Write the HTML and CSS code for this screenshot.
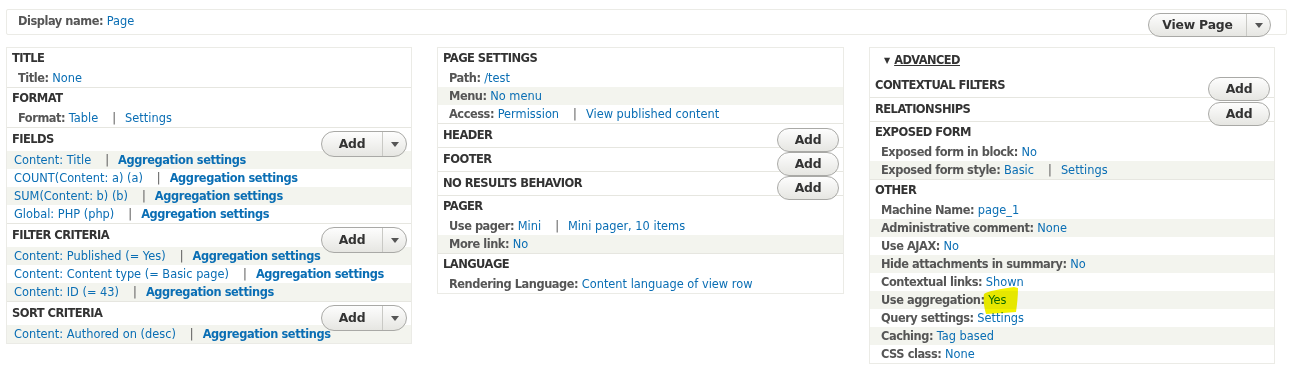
FILE: index.html
```html
<!DOCTYPE html>
<html lang="en">
<head>
  <meta charset="UTF-8">
  <title>Views - Page display</title>
  <link rel="stylesheet" href="styles.css">
</head>
<body>

  <div class="display-top">
    <span class="label">Display name:</span>&nbsp;<a href="#">Page</a>
    <div class="btn split view-page">
      <span class="btn-main">View Page</span>
      <span class="btn-drop"><svg width="8" height="5" viewBox="0 0 8 5"><path d="M0 0 H8 L4 5 Z" fill="#555"/></svg></span>
    </div>
  </div>

  <div class="columns">

    <div class="column">
      <div class="bucket">
        <div class="bucket-title">Title</div>
        <div class="row setting"><span class="label">Title:</span> <a href="#">None</a></div>
      </div>
      <div class="bucket">
        <div class="bucket-title">Format</div>
        <div class="row setting"><span class="label">Format:</span> <a href="#">Table</a><span class="sep">|</span><a href="#">Settings</a></div>
      </div>
      <div class="bucket">
        <div class="bucket-title has-btn">Fields
          <div class="btn split add"><span class="btn-main">Add</span><span class="btn-drop"><svg width="8" height="5" viewBox="0 0 8 5"><path d="M0 0 H8 L4 5 Z" fill="#555"/></svg></span></div>
        </div>
        <div class="row item alt"><a href="#">Content: Title</a><span class="sep">|</span><a class="strong" href="#">Aggregation settings</a></div>
        <div class="row item"><a href="#">COUNT(Content: a) (a)</a><span class="sep">|</span><a class="strong" href="#">Aggregation settings</a></div>
        <div class="row item alt"><a href="#">SUM(Content: b) (b)</a><span class="sep">|</span><a class="strong" href="#">Aggregation settings</a></div>
        <div class="row item"><a href="#">Global: PHP (php)</a><span class="sep">|</span><a class="strong" href="#">Aggregation settings</a></div>
      </div>
      <div class="bucket">
        <div class="bucket-title has-btn">Filter criteria
          <div class="btn split add"><span class="btn-main">Add</span><span class="btn-drop"><svg width="8" height="5" viewBox="0 0 8 5"><path d="M0 0 H8 L4 5 Z" fill="#555"/></svg></span></div>
        </div>
        <div class="row item alt"><a href="#">Content: Published (= Yes)</a><span class="sep">|</span><a class="strong" href="#">Aggregation settings</a></div>
        <div class="row item"><a href="#">Content: Content type (= Basic page)</a><span class="sep">|</span><a class="strong" href="#">Aggregation settings</a></div>
        <div class="row item alt"><a href="#">Content: ID (= 43)</a><span class="sep">|</span><a class="strong" href="#">Aggregation settings</a></div>
      </div>
      <div class="bucket">
        <div class="bucket-title has-btn">Sort criteria
          <div class="btn split add"><span class="btn-main">Add</span><span class="btn-drop"><svg width="8" height="5" viewBox="0 0 8 5"><path d="M0 0 H8 L4 5 Z" fill="#555"/></svg></span></div>
        </div>
        <div class="row item alt"><a href="#">Content: Authored on (desc)</a><span class="sep">|</span><a class="strong" href="#">Aggregation settings</a></div>
      </div>
    </div>

    <div class="column wide">
      <div class="bucket">
        <div class="bucket-title">Page settings</div>
        <div class="row setting"><span class="label">Path:</span> <a href="#">/test</a></div>
        <div class="row setting alt"><span class="label">Menu:</span> <a href="#">No menu</a></div>
        <div class="row setting"><span class="label">Access:</span> <a href="#">Permission</a><span class="sep">|</span><a href="#">View published content</a></div>
      </div>
      <div class="bucket">
        <div class="bucket-title has-btn">Header <div class="btn add single">Add</div></div>
      </div>
      <div class="bucket">
        <div class="bucket-title has-btn">Footer <div class="btn add single">Add</div></div>
      </div>
      <div class="bucket">
        <div class="bucket-title has-btn">No results behavior <div class="btn add single">Add</div></div>
      </div>
      <div class="bucket">
        <div class="bucket-title">Pager</div>
        <div class="row setting"><span class="label">Use pager:</span> <a href="#">Mini</a><span class="sep">|</span><a href="#">Mini pager, 10 items</a></div>
        <div class="row setting alt"><span class="label">More link:</span> <a href="#">No</a></div>
      </div>
      <div class="bucket">
        <div class="bucket-title">Language</div>
        <div class="row setting"><span class="label">Rendering Language:</span> <a href="#">Content language of view row</a></div>
      </div>
    </div>

    <div class="column">
      <div class="advanced"><span class="arrow">&#9660;</span> <span class="advanced-link">Advanced</span></div>
      <div class="bucket">
        <div class="bucket-title has-btn tall">Contextual filters <div class="btn add single">Add</div></div>
      </div>
      <div class="bucket">
        <div class="bucket-title has-btn">Relationships <div class="btn add single">Add</div></div>
      </div>
      <div class="bucket">
        <div class="bucket-title">Exposed form</div>
        <div class="row setting"><span class="label">Exposed form in block:</span> <a href="#">No</a></div>
        <div class="row setting alt"><span class="label">Exposed form style:</span> <a href="#">Basic</a><span class="sep">|</span><a href="#">Settings</a></div>
      </div>
      <div class="bucket">
        <div class="bucket-title">Other</div>
        <div class="row setting"><span class="label">Machine Name:</span> <a href="#">page_1</a></div>
        <div class="row setting alt"><span class="label">Administrative comment:</span> <a href="#">None</a></div>
        <div class="row setting"><span class="label">Use AJAX:</span> <a href="#">No</a></div>
        <div class="row setting alt"><span class="label">Hide attachments in summary:</span> <a href="#">No</a></div>
        <div class="row setting"><span class="label">Contextual links:</span> <a href="#">Shown</a></div>
        <div class="row setting alt"><span class="label">Use aggregation:</span> <span class="hl"><a href="#">Yes</a><svg class="marker" width="38" height="28" viewBox="0 0 38 28"><path d="M1 7 C4 4 18 2 31 0 L35 1 C35 9 34 18 33 25 L20 26 L3 27 C1 20 0 12 1 7 Z" fill="#f2f200"/></svg></span></div>
        <div class="row setting"><span class="label">Query settings:</span> <a href="#">Settings</a></div>
        <div class="row setting alt"><span class="label">Caching:</span> <a href="#">Tag based</a></div>
        <div class="row setting"><span class="label">CSS class:</span> <a href="#">None</a></div>
      </div>
    </div>

  </div>

</body>
</html>
```

FILE: styles.css
```css
body { margin: 0; font-family: "DejaVu Sans", sans-serif; font-size: 11.4px; color: #333; background: #fff; }
a { color: #0a6eb4; text-decoration: none; }
.label { font-weight: bold; color: #555; letter-spacing: -0.45px; }
.strong { font-weight: bold; letter-spacing: -0.4px; }
.sep { color: #555; margin: 0 9px 0 14px; }

.display-top { display: flex; align-items: flex-start; margin: 9px 2px 0 6px; height: 24px; padding-left: 11px; border: 1px solid #ebebe6; border-radius: 2px; line-height: 22px; }
.view-page { margin: 3px 15px 0 auto; }
.view-page .btn-main { width: 97px; }

.columns { display: flex; gap: 25px; margin: 12px 0 0 6px; align-items: flex-start; }
.column { width: 406px; border: 1px solid #ebebe6; box-sizing: border-box; }
.column.wide { width: 407px; }

.bucket { border-bottom: 1px solid #e6e6e0; }
.bucket:last-child { border-bottom: 0; }
.bucket-title { position: relative; height: 21px; line-height: 21px; padding: 0 5px; font-weight: bold; text-transform: uppercase; color: #333; letter-spacing: -0.55px; font-size: 11.5px; }
.bucket-title.has-btn { height: 23px; line-height: 23px; }
.bucket-title.tall { height: 24px; line-height: 24px; }

.row { height: 18px; line-height: 18px; white-space: nowrap; }
.row.alt { background: #f3f4ee; }
.row.setting { padding-left: 11px; }
.row.item { padding-left: 7px; }

.advanced { height: 25px; line-height: 25px; padding-left: 14px; font-weight: bold; color: #333; }
.advanced .arrow { font-size: 8px; vertical-align: 1px; }
.advanced-link { text-decoration: underline; text-transform: uppercase; letter-spacing: -0.55px; }

.btn { display: inline-flex; box-sizing: border-box; height: 24px; border: 1px solid #a9a9a6; border-radius: 14px; background: linear-gradient(#fdfdfd, #e6e6e2); font-weight: bold; font-size: 12.4px; color: #333; letter-spacing: -0.2px; text-transform: none; line-height: 22px; }
.btn-main { display: flex; justify-content: center; }
.btn-drop { display: flex; align-items: center; justify-content: center; width: 23px; border-left: 1px solid #c9c9c5; }
.add { position: absolute; right: 4px; top: 3px; }
.add.split { height: 26px; line-height: 24px; }
.add.split .btn-main { width: 60px; }
.add.single { width: 62px; justify-content: center; top: 4px; }

.hl { position: relative; }
.marker { position: absolute; left: -5px; top: -6px; mix-blend-mode: multiply; }
```
